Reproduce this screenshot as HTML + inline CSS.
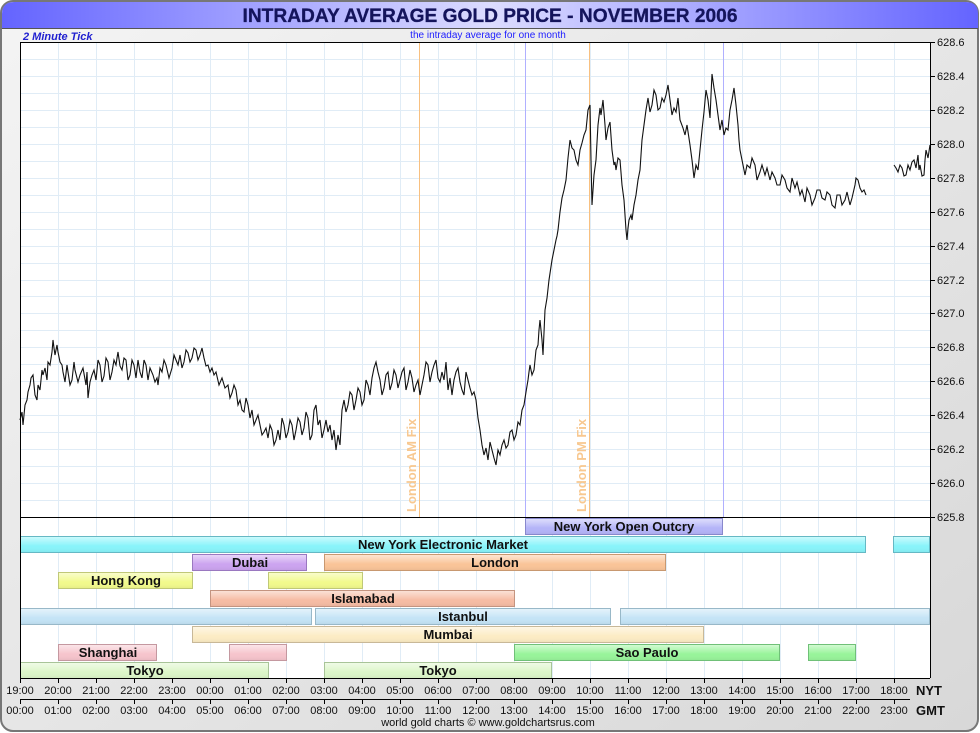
<!DOCTYPE html>
<html><head><meta charset="utf-8"><style>
html,body{margin:0;padding:0;background:#fff;}
svg{display:block;font-family:"Liberation Sans",sans-serif;}
.b{font-weight:bold;font-size:13px;fill:#111;text-anchor:middle;}
.ax{font-size:11px;fill:#111;text-anchor:middle;}
.yl{font-size:11px;fill:#111;}
</style></head><body>
<svg width="980" height="733" viewBox="0 0 980 733" xmlns="http://www.w3.org/2000/svg">
<defs>
<linearGradient id="frame" x1="0" y1="0" x2="1" y2="1"><stop offset="0" stop-color="#f4f4f4"/><stop offset="1" stop-color="#d8d8d8"/></linearGradient>
<linearGradient id="title" x1="0" y1="0" x2="1" y2="0"><stop offset="0" stop-color="#6464ff"/><stop offset="0.5" stop-color="#dcdcff"/><stop offset="1" stop-color="#6464ff"/></linearGradient>
<linearGradient id="shine" x1="0" y1="0" x2="0" y2="1"><stop offset="0" stop-color="#fff" stop-opacity="0.55"/><stop offset="0.45" stop-color="#fff" stop-opacity="0.15"/><stop offset="0.6" stop-color="#fff" stop-opacity="0"/><stop offset="1" stop-color="#000" stop-opacity="0.05"/></linearGradient>
</defs>
<rect x="1" y="1" width="977" height="730" rx="12" fill="url(#frame)" stroke="#777" stroke-width="2"/>
<path d="M2 28 V14 Q2 2 14 2 H966 Q978 2 978 14 V28 Z" fill="url(#title)"/>
<line x1="2" y1="28.5" x2="978" y2="28.5" stroke="#555"/>
<text x="490" y="22" text-anchor="middle" font-size="19" font-weight="bold" fill="#14145c" stroke="#14145c" stroke-width="0.3" textLength="495" lengthAdjust="spacingAndGlyphs">INTRADAY AVERAGE GOLD PRICE - NOVEMBER 2006</text>
<text x="23" y="40" font-size="11" font-style="italic" font-weight="bold" fill="#2020d0">2 Minute Tick</text>
<text x="488" y="38" font-size="10" fill="#2020ff" text-anchor="middle">the intraday average for one month</text>
<rect x="20" y="42" width="910" height="636" fill="#fff"/>
<g stroke="#e0ecf6" stroke-width="1">
<path d="M58.5 42V678M96.5 42V678M134.5 42V678M172.5 42V678M210.5 42V678M248.5 42V678M286.5 42V678M324.5 42V678M362.5 42V678M400.5 42V678M438.5 42V678M476.5 42V678M514.5 42V678M552.5 42V678M590.5 42V678M628.5 42V678M666.5 42V678M704.5 42V678M742.5 42V678M780.5 42V678M818.5 42V678M856.5 42V678M894.5 42V678"/>
<path d="M20 59.5H930M20 76.5H930M20 93.5H930M20 110.5H930M20 127.5H930M20 144.5H930M20 161.5H930M20 178.5H930M20 195.5H930M20 212.5H930M20 229.5H930M20 246.5H930M20 263.5H930M20 280.5H930M20 296.5H930M20 313.5H930M20 330.5H930M20 347.5H930M20 364.5H930M20 381.5H930M20 398.5H930M20 415.5H930M20 432.5H930M20 449.5H930M20 466.5H930M20 483.5H930M20 500.5H930"/>
</g>
<line x1="419.5" y1="42" x2="419.5" y2="517" stroke="#f8c080"/>
<line x1="589.5" y1="42" x2="589.5" y2="517" stroke="#f8c080"/>
<line x1="525.5" y1="42" x2="525.5" y2="517" stroke="#b0b0ff"/>
<line x1="723.5" y1="42" x2="723.5" y2="517" stroke="#b0b0ff"/>
<text transform="translate(416,512) rotate(-90)" font-size="13" font-weight="bold" fill="#f8c890">London AM Fix</text>
<text transform="translate(586,512) rotate(-90)" font-size="13" font-weight="bold" fill="#f8c890">London PM Fix</text>
<polyline fill="none" stroke="#111" stroke-width="1.1" points="20,420 22,412 23,425 25,405 27,400 28,392 30,385 31,378 33,375 35,395 37,400 38,385 40,390 42,370 43,375 45,368 47,380 48,362 50,365 52,352 53,340 54,348 55,355 57,345 58,352 60,362 62,365 63,372 65,382 67,365 68,372 70,385 72,380 74,362 75,370 78,382 80,375 83,368 86,385 87,372 88,398 90,382 92,375 94,370 96,380 98,360 100,365 102,382 104,376 106,358 108,362 110,380 112,372 114,360 116,365 117,358 118,352 120,366 122,370 124,358 126,360 128,380 130,375 132,360 134,365 136,378 138,360 140,372 142,378 144,360 146,365 148,380 150,368 153,375 155,382 157,378 158,385 160,368 162,372 164,360 166,365 169,378 172,368 174,355 176,360 178,365 180,355 182,368 184,362 186,350 188,353 190,362 192,358 194,348 196,350 198,360 200,355 202,348 204,358 206,366 208,365 210,372 212,368 214,375 216,372 219,385 222,378 225,388 228,385 230,398 232,393 234,385 236,390 238,405 240,400 242,410 244,412 246,398 248,405 250,418 252,410 254,425 256,420 258,415 260,425 262,435 264,432 266,428 268,438 270,425 272,430 274,445 276,440 278,430 280,440 282,418 284,425 286,438 288,432 290,420 292,425 294,440 296,430 298,418 300,422 302,435 304,428 306,412 308,418 310,440 312,435 314,410 316,405 318,425 320,420 322,438 324,430 326,420 328,432 330,425 332,440 334,430 336,450 338,435 340,445 342,410 344,400 346,412 348,405 350,392 352,395 354,410 356,400 358,388 360,392 362,405 364,400 366,380 368,385 370,395 372,378 374,368 376,362 378,372 380,380 382,395 384,388 386,375 388,372 390,390 392,383 394,370 396,375 398,388 400,380 402,372 404,368 406,390 408,382 410,370 412,378 414,392 416,385 418,380 420,395 422,385 424,375 426,362 428,365 430,382 432,372 434,365 436,360 438,378 440,382 442,372 444,380 446,362 448,390 450,378 452,395 454,380 456,372 458,368 460,382 462,390 464,395 466,372 468,380 470,388 472,395 474,392 476,400 478,418 480,430 482,445 484,455 486,448 488,460 490,442 492,450 494,458 496,465 498,450 500,455 502,445 504,440 506,448 508,445 510,432 512,430 514,440 516,435 518,422 520,425 522,410 524,405 526,392 528,380 529,372 530,365 532,375 534,370 536,350 538,345 539,330 540,320 542,340 543,355 545,310 547,298 549,280 552,260 554,250 556,240 557,236 558,230 560,212 562,198 564,190 566,180 568,158 570,140 572,148 574,150 576,160 578,165 580,150 582,143 584,135 586,130 588,110 590,105 591,160 592,205 594,175 596,160 598,125 600,108 601,115 603,100 605,125 606,140 608,128 610,122 612,150 614,165 615,162 616,170 618,158 620,160 622,185 624,200 626,230 627,240 628,228 629,220 631,215 632,220 634,205 636,195 638,180 640,170 642,140 644,125 646,110 648,98 650,112 652,105 654,90 656,95 658,110 660,108 662,98 664,102 666,95 668,85 670,100 672,115 674,108 676,112 678,98 680,120 683,128 685,135 687,125 690,145 692,160 694,178 696,165 698,170 700,150 702,130 704,112 706,90 708,100 710,118 711,95 712,74 714,88 716,100 718,115 720,130 722,120 724,135 726,128 728,130 729,120 730,110 732,100 734,88 736,105 738,125 739,140 740,150 742,160 745,175 747,165 750,168 752,158 755,165 757,180 760,172 762,165 765,175 767,168 770,180 772,172 775,178 777,185 780,185 782,175 785,180 787,188 790,192 792,178 795,188 797,182 800,195 802,190 805,202 807,188 810,195 812,205 815,198 817,190 820,190 822,198 825,200 827,192 830,195 832,205 835,208 837,195 840,195 842,205 845,200 847,192 850,205 852,198 855,185 856,178 858,180 860,188 862,192 864,190 866,195"/>
<polyline fill="none" stroke="#111" stroke-width="1.1" points="894,165 896,168 898,172 900,165 902,168 904,176 906,175 908,165 910,170 912,162 914,160 916,168 918,155 919,170 920,165 922,176 924,175 925,160 926,150 928,158 930,145"/>
<g stroke-width="1">
<rect x="525.5" y="518.5" width="197" height="16" fill="#b4b4f8" stroke="#8888cc"/>
<rect x="20.5" y="536.5" width="845" height="16" fill="#88f4fa" stroke="#66b8c4"/>
<rect x="893.5" y="536.5" width="36" height="16" fill="#88f4fa" stroke="#66b8c4"/>
<rect x="192.5" y="554.5" width="114" height="16" fill="#cca4f0" stroke="#9a78c0"/>
<rect x="324.5" y="554.5" width="341" height="16" fill="#fac498" stroke="#c89870"/>
<rect x="58.5" y="572.5" width="134" height="16" fill="#f2fa8c" stroke="#c0c878"/>
<rect x="268.5" y="572.5" width="94" height="16" fill="#f2fa8c" stroke="#c0c878"/>
<rect x="210.5" y="590.5" width="304" height="16" fill="#f6bca4" stroke="#c49480"/>
<rect x="20.5" y="608.5" width="291" height="16" fill="#c4e4f6" stroke="#98b8c8"/>
<rect x="315.5" y="608.5" width="295" height="16" fill="#c4e4f6" stroke="#98b8c8"/>
<rect x="620.5" y="608.5" width="309" height="16" fill="#c4e4f6" stroke="#98b8c8"/>
<rect x="192.5" y="626.5" width="511" height="16" fill="#fcecc4" stroke="#c8b898"/>
<rect x="58.5" y="644.5" width="98" height="16" fill="#f6c4cc" stroke="#c498a0"/>
<rect x="229.5" y="644.5" width="57" height="16" fill="#f6c4cc" stroke="#c498a0"/>
<rect x="514.5" y="644.5" width="265" height="16" fill="#98f49a" stroke="#70c078"/>
<rect x="808.5" y="644.5" width="47" height="16" fill="#98f49a" stroke="#70c078"/>
<rect x="20.5" y="662.5" width="248" height="16" fill="#dcf6c8" stroke="#a8c498"/>
<rect x="324.5" y="662.5" width="227" height="16" fill="#dcf6c8" stroke="#a8c498"/>
</g>
<g fill="url(#shine)">
<rect x="526" y="519" width="196" height="15"/><rect x="21" y="537" width="844" height="15"/><rect x="894" y="537" width="35" height="15"/>
<rect x="193" y="555" width="113" height="15"/><rect x="325" y="555" width="340" height="15"/><rect x="59" y="573" width="133" height="15"/><rect x="269" y="573" width="93" height="15"/>
<rect x="211" y="591" width="303" height="15"/><rect x="21" y="609" width="290" height="15"/><rect x="316" y="609" width="294" height="15"/><rect x="621" y="609" width="308" height="15"/>
<rect x="193" y="627" width="510" height="15"/><rect x="59" y="645" width="97" height="15"/><rect x="230" y="645" width="56" height="15"/><rect x="515" y="645" width="264" height="15"/><rect x="809" y="645" width="46" height="15"/>
<rect x="21" y="663" width="247" height="15"/><rect x="325" y="663" width="226" height="15"/>
</g>
<text class="b" x="624" y="531">New York Open Outcry</text>
<text class="b" x="443" y="549">New York Electronic Market</text>
<text class="b" x="250" y="567">Dubai</text>
<text class="b" x="495" y="567">London</text>
<text class="b" x="126" y="585">Hong Kong</text>
<text class="b" x="363" y="603">Islamabad</text>
<text class="b" x="463" y="621">Istanbul</text>
<text class="b" x="448" y="639">Mumbai</text>
<text class="b" x="108" y="657">Shanghai</text>
<text class="b" x="647" y="657">Sao Paulo</text>
<text class="b" x="145" y="675">Tokyo</text>
<text class="b" x="438" y="675">Tokyo</text>
<line x1="20.5" y1="42" x2="20.5" y2="678" stroke="#000"/>
<line x1="930.5" y1="42" x2="930.5" y2="678" stroke="#000"/>
<line x1="20" y1="42.5" x2="930" y2="42.5" stroke="#000"/>
<line x1="20" y1="517.5" x2="930" y2="517.5" stroke="#000"/>
<line x1="20" y1="678.5" x2="930" y2="678.5" stroke="#000"/>
<line x1="20" y1="699.5" x2="910" y2="699.5" stroke="#000"/>
<g stroke="#000"><path d="M930 42.5h5M930 76.5h5M930 110.5h5M930 144.5h5M930 178.5h5M930 212.5h5M930 246.5h5M930 280.5h5M930 313.5h5M930 347.5h5M930 381.5h5M930 415.5h5M930 449.5h5M930 483.5h5M930 517.5h5"/>
<path d="M20.5 678v5M58.5 678v5M96.5 678v5M134.5 678v5M172.5 678v5M210.5 678v5M248.5 678v5M286.5 678v5M324.5 678v5M362.5 678v5M400.5 678v5M438.5 678v5M476.5 678v5M514.5 678v5M552.5 678v5M590.5 678v5M628.5 678v5M666.5 678v5M704.5 678v5M742.5 678v5M780.5 678v5M818.5 678v5M856.5 678v5M894.5 678v5"/>
<path d="M20.5 699v5M58.5 699v5M96.5 699v5M134.5 699v5M172.5 699v5M210.5 699v5M248.5 699v5M286.5 699v5M324.5 699v5M362.5 699v5M400.5 699v5M438.5 699v5M476.5 699v5M514.5 699v5M552.5 699v5M590.5 699v5M628.5 699v5M666.5 699v5M704.5 699v5M742.5 699v5M780.5 699v5M818.5 699v5M856.5 699v5M894.5 699v5"/></g>
<g class="yl">
<text x="937" y="46">628.6</text><text x="937" y="80">628.4</text><text x="937" y="114">628.2</text><text x="937" y="148">628.0</text><text x="937" y="182">627.8</text><text x="937" y="216">627.6</text><text x="937" y="250">627.4</text><text x="937" y="284">627.2</text><text x="937" y="317">627.0</text><text x="937" y="351">626.8</text><text x="937" y="385">626.6</text><text x="937" y="419">626.4</text><text x="937" y="453">626.2</text><text x="937" y="487">626.0</text><text x="937" y="521">625.8</text>
</g>
<g class="ax">
<text x="20" y="694">19:00</text><text x="58" y="694">20:00</text><text x="96" y="694">21:00</text><text x="134" y="694">22:00</text><text x="172" y="694">23:00</text><text x="210" y="694">00:00</text><text x="248" y="694">01:00</text><text x="286" y="694">02:00</text><text x="324" y="694">03:00</text><text x="362" y="694">04:00</text><text x="400" y="694">05:00</text><text x="438" y="694">06:00</text><text x="476" y="694">07:00</text><text x="514" y="694">08:00</text><text x="552" y="694">09:00</text><text x="590" y="694">10:00</text><text x="628" y="694">11:00</text><text x="666" y="694">12:00</text><text x="704" y="694">13:00</text><text x="742" y="694">14:00</text><text x="780" y="694">15:00</text><text x="818" y="694">16:00</text><text x="856" y="694">17:00</text><text x="894" y="694">18:00</text>
<text x="20" y="714">00:00</text><text x="58" y="714">01:00</text><text x="96" y="714">02:00</text><text x="134" y="714">03:00</text><text x="172" y="714">04:00</text><text x="210" y="714">05:00</text><text x="248" y="714">06:00</text><text x="286" y="714">07:00</text><text x="324" y="714">08:00</text><text x="362" y="714">09:00</text><text x="400" y="714">10:00</text><text x="438" y="714">11:00</text><text x="476" y="714">12:00</text><text x="514" y="714">13:00</text><text x="552" y="714">14:00</text><text x="590" y="714">15:00</text><text x="628" y="714">16:00</text><text x="666" y="714">17:00</text><text x="704" y="714">18:00</text><text x="742" y="714">19:00</text><text x="780" y="714">20:00</text><text x="818" y="714">21:00</text><text x="856" y="714">22:00</text><text x="894" y="714">23:00</text>
</g>
<text x="916" y="695" font-size="13" font-weight="bold" fill="#111">NYT</text>
<text x="916" y="715" font-size="13" font-weight="bold" fill="#111">GMT</text>
<text x="488" y="726" font-size="11" fill="#111" text-anchor="middle">world gold charts © www.goldchartsrus.com</text>
</svg>
</body></html>
